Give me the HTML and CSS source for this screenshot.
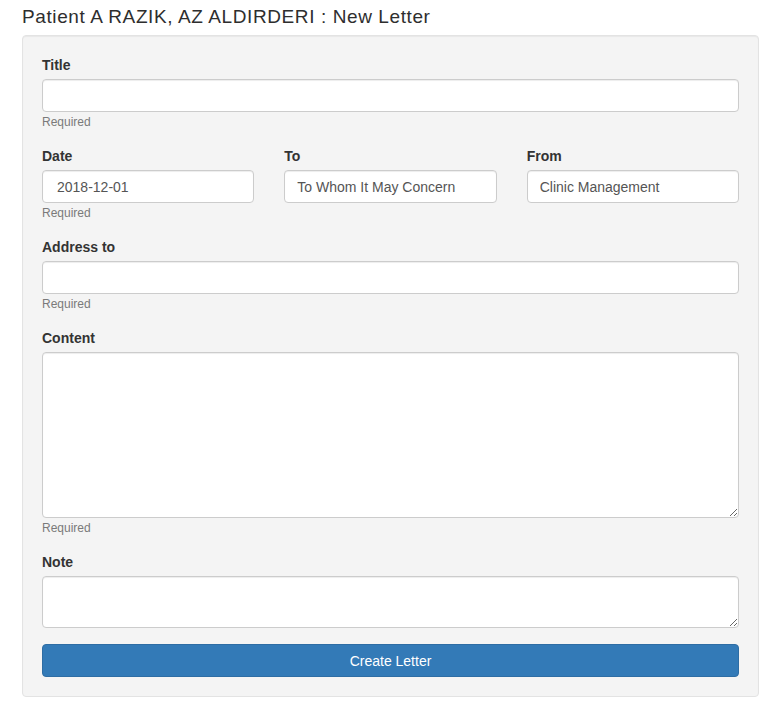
FILE: index.html
```html
<!DOCTYPE html>
<html>
<head>
<meta charset="utf-8">
<link rel="stylesheet" href="styles.css">
</head>
<body>
<div class="page">
  <h4 class="page-title">Patient A RAZIK, AZ ALDIRDERI : New Letter</h4>
  <form class="well">
    <div class="form-group">
      <label class="control-label">Title</label>
      <input class="form-control" type="text" value="">
      <span class="help-block">Required</span>
    </div>
    <div class="row-3">
      <div class="form-group">
        <label class="control-label">Date</label>
        <input class="form-control date-input" type="text" value="2018-12-01">
        <span class="help-block">Required</span>
      </div>
      <div class="form-group">
        <label class="control-label">To</label>
        <input class="form-control" type="text" value="To Whom It May Concern">
      </div>
      <div class="form-group">
        <label class="control-label">From</label>
        <input class="form-control" type="text" value="Clinic Management">
      </div>
    </div>
    <div class="form-group">
      <label class="control-label">Address to</label>
      <input class="form-control" type="text" value="">
      <span class="help-block">Required</span>
    </div>
    <div class="form-group">
      <label class="control-label">Content</label>
      <textarea class="form-control content-area"></textarea>
      <span class="help-block">Required</span>
    </div>
    <div class="form-group">
      <label class="control-label">Note</label>
      <textarea class="form-control note-area"></textarea>
    </div>
    <button type="button" class="btn-primary">Create Letter</button>
  </form>
</div>
</body>
</html>
```

FILE: styles.css
```css
* {
  box-sizing: border-box;
}

html, body {
  margin: 0;
  padding: 0;
  background: #ffffff;
}

body {
  font-family: "Liberation Sans", Arial, Helvetica, sans-serif;
  font-size: 14px;
  line-height: 20px;
  color: #333333;
}

.page {
  padding: 0 22px;
}

.page-title {
  margin: 7px 0 8px;
  font-size: 19px;
  letter-spacing: 0.6px;
  line-height: 20px;
  font-weight: normal;
  color: #2e2e2e;
}

.well {
  margin: 0;
  padding: 19px;
  background: #f4f4f4;
  border: 1px solid #e3e3e3;
  border-radius: 4px;
  box-shadow: inset 0 1px 1px rgba(0, 0, 0, 0.05);
}

.form-group {
  margin-bottom: 16px;
}

.row-3 {
  display: grid;
  grid-template-columns: 1fr 1fr 1fr;
  column-gap: 30px;
}

.control-label {
  display: block;
  margin-bottom: 4px;
  font-weight: bold;
  font-size: 14px;
  line-height: 20px;
  color: #333333;
}

.form-control {
  display: block;
  width: 100%;
  height: 33px;
  margin: 0;
  padding: 6px 12px;
  font-family: "Liberation Sans", Arial, Helvetica, sans-serif;
  font-size: 14px;
  line-height: 20px;
  color: #555555;
  background: #ffffff;
  border: 1px solid #cccccc;
  border-radius: 4px;
  box-shadow: inset 0 1px 1px rgba(0, 0, 0, 0.075);
  outline: none;
}

.date-input {
  padding-left: 14px;
}

.content-area {
  height: 166px;
  resize: vertical;
}

.note-area {
  height: 52px;
  resize: vertical;
}

.help-block {
  display: block;
  margin-top: 3px;
  font-size: 12px;
  line-height: 15px;
  color: #7a7a7a;
}

.btn-primary {
  display: block;
  width: 100%;
  height: 33px;
  margin: 0;
  padding: 6px 12px;
  font-family: "Liberation Sans", Arial, Helvetica, sans-serif;
  font-size: 14px;
  line-height: 20px;
  color: #ffffff;
  background: #337ab7;
  border: 1px solid #2e6da4;
  border-radius: 4px;
  cursor: pointer;
}
```
